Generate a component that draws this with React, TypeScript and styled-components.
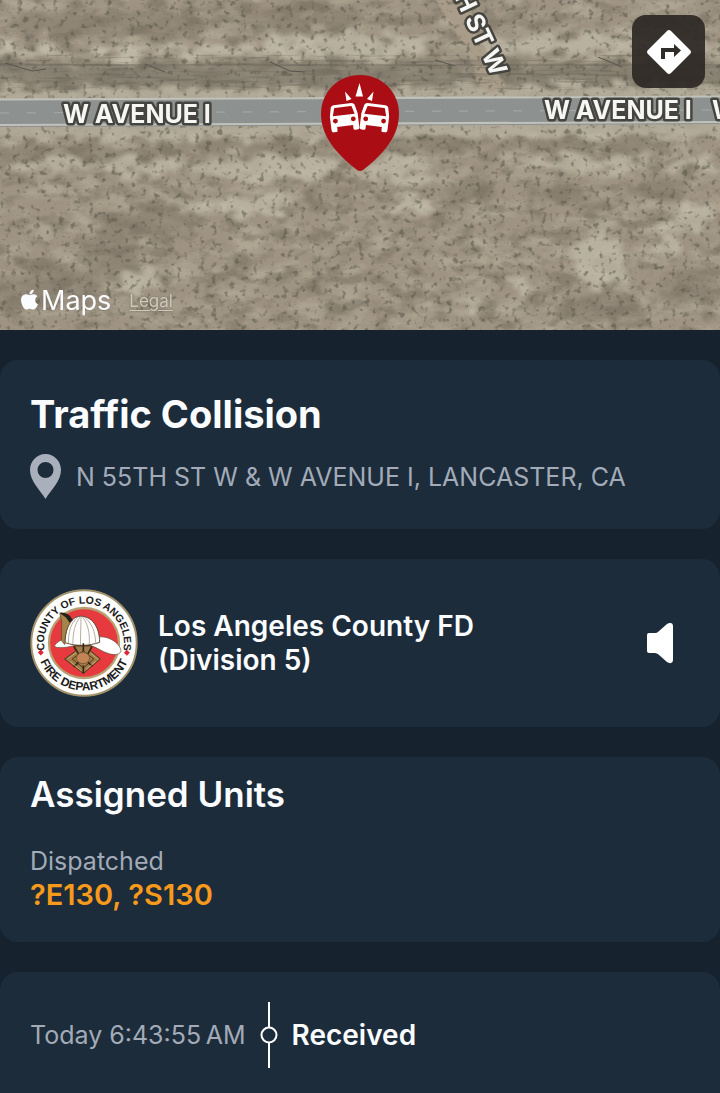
import React from 'react';
import styled, { createGlobalStyle } from 'styled-components';
import { FaApple } from 'react-icons/fa';

const GlobalStyle = createGlobalStyle`
	* { box-sizing: border-box; }

	body {
		margin: 0;
		background: #16222d;
		color: #fafcff;
		font-family: Inter, "Liberation Sans", sans-serif;
	}

	h1, h2, h3, p, dl, dt, dd { margin: 0; }
`;

const Page = styled.div`
	display: flex;
	flex-direction: column;
	gap: 30px;
	min-height: 100vh;
	overflow: hidden;
`;

const MapHeader = styled.header`
	position: relative;
	height: 330px;
	overflow: hidden;
	background: #a0937f;
`;

const MapDrawing = styled.svg`
	display: block;
	width: 100%;
	height: 100%;
`;

const RoadLabel = styled.text`
	fill: #f6f6f4;
	stroke: #45443f;
	stroke-width: 5px;
	stroke-linejoin: round;
	paint-order: stroke;
	font-family: Inter, "Liberation Sans", sans-serif;
	font-size: 25px;
	font-weight: 700;
`;

const IncidentPin = styled.svg`
	position: absolute;
	top: 75px;
	left: 50%;
	width: 80px;
	height: 97px;
	transform: translateX(-50%);
`;

const DirectionsButton = styled.button`
	position: absolute;
	top: 15px;
	right: 15px;
	display: grid;
	place-items: center;
	width: 73px;
	height: 73px;
	padding: 0;
	border: 0;
	border-radius: 14px;
	background: rgba(44, 40, 36, .92);
	cursor: pointer;
`;

const Attribution = styled.div`
	position: absolute;
	left: 18px;
	bottom: 14px;
	display: flex;
	align-items: center;
	gap: 18px;
`;

const MapsBrand = styled.span`
	display: flex;
	align-items: center;
	font-size: 27px;
	line-height: 30px;

	svg { margin-bottom: 4px; }
`;

const LegalLink = styled.a`
	color: #cfc9bd;
	font-size: 17px;
	line-height: 20px;
	text-shadow: 0 0 2px #6b6455;
	text-underline-offset: 3px;
`;

const Card = styled.section`
	padding: 30px;
	border-radius: 18px;
	background: #1c2c3b;
`;

const IncidentCard = styled(Card)`
	display: flex;
	flex-direction: column;
	gap: 16px;
`;

const IncidentTitle = styled.h1`
	font-size: 38px;
	font-weight: 700;
	line-height: 48px;
`;

const Address = styled.p`
	display: flex;
	align-items: center;
	gap: 15px;
	color: #a2abb7;
	font-size: 25px;
	line-height: 32px;

	svg { flex: none; }
`;

const AgencyCard = styled(Card)`
	display: flex;
	align-items: center;
	gap: 20px;

	svg { flex: none; }
`;

const AgencyName = styled.h2`
	flex: 1;
	font-size: 28px;
	font-weight: 600;
	line-height: 34px;

	span { display: block; }
`;

const SpeakerButton = styled.button`
	display: grid;
	place-items: center;
	padding: 0;
	margin-right: 16px;
	border: 0;
	background: none;
	cursor: pointer;
`;

const UnitsCard = styled(Card)`
	display: flex;
	flex-direction: column;
	gap: 28px;
	padding-top: 15px;
`;

const SectionTitle = styled.h2`
	font-size: 35px;
	font-weight: 600;
	line-height: 44px;
`;

const UnitGroup = styled.dl`
	dt {
		color: #a2abb7;
		font-size: 25px;
		line-height: 34px;
	}

	dd {
		color: #f79a1c;
		font-size: 29px;
		font-weight: 600;
		line-height: 34px;
	}
`;

const TimelineCard = styled(Card)`
	display: flex;
	flex: 1;
	align-items: flex-start;
	gap: 14px;
	border-radius: 18px 18px 0 0;
	line-height: 66px;

	svg { flex: none; }
`;

const TimelineTime = styled.time`
	color: #a2abb7;
	font-size: 25px;
`;

const TimelineStatus = styled.h3`
	font-size: 28px;
	font-weight: 600;
`;

const lightPatches = [
	[100, 52, 150, 4], [200, 51, 140, 4], [345, 46, 85, 11], [590, 44, 130, 9], [20, 52, 40, 4],
	[140, 168, 40, 9], [265, 168, 75, 11], [405, 168, 35, 12], [585, 163, 65, 7],
	[250, 205, 35, 10], [600, 260, 25, 30], [695, 218, 18, 16], [670, 240, 12, 16],
	[140, 283, 18, 12], [470, 302, 20, 7], [410, 207, 26, 7],
	[520, 283, 12, 8], [200, 207, 30, 5], [50, 165, 50, 5], [690, 163, 30, 6],
	[180, 135, 200, 4], [560, 132, 200, 4], [180, 94, 200, 4], [560, 91, 200, 4],
];

const darkPatches = [
	[110, 24, 100, 14], [300, 20, 70, 14], [70, 152, 90, 8], [230, 148, 100, 8],
	[400, 142, 90, 8], [600, 145, 90, 9], [465, 193, 26, 14], [560, 195, 30, 10],
	[150, 225, 50, 16], [600, 308, 40, 16], [40, 285, 60, 20], [660, 190, 30, 12],
	[110, 255, 30, 20], [340, 190, 30, 10], [690, 290, 30, 20], [320, 280, 18, 8],
];

const Satellite = () => (
	<MapDrawing viewBox="0 0 720 330" preserveAspectRatio="xMidYMid slice" role="img" aria-label="Satellite map of W Avenue I">
		<defs>
			<filter id="lightMottle" x="0" y="0" width="100%" height="100%" colorInterpolationFilters="sRGB">
				<feTurbulence type="fractalNoise" baseFrequency="0.03 0.06" numOctaves={6} seed={8} />
				<feColorMatrix values="0 0 0 0 .76  0 0 0 0 .73  0 0 0 0 .65  3 0 0 0 -1.3" />
			</filter>
			<filter id="darkMottle" x="0" y="0" width="100%" height="100%" colorInterpolationFilters="sRGB">
				<feTurbulence type="fractalNoise" baseFrequency="0.04 0.07" numOctaves={6} seed={21} />
				<feColorMatrix values="0 0 0 0 .43  0 0 0 0 .4  0 0 0 0 .34  4 0 0 0 -1.9" />
			</filter>
			<filter id="scrub" x="0" y="0" width="100%" height="100%" colorInterpolationFilters="sRGB">
				<feTurbulence type="fractalNoise" baseFrequency="0.17" numOctaves={2} seed={4} />
				<feColorMatrix values="0 0 0 0 .33  0 0 0 0 .33  0 0 0 0 .28  5 0 0 0 -2.9" />
				<feGaussianBlur stdDeviation={0.7} />
			</filter>
			<filter id="streaks" x="0" y="0" width="100%" height="100%" colorInterpolationFilters="sRGB">
				<feTurbulence type="fractalNoise" baseFrequency="0.02 0.3" numOctaves={3} seed={12} />
				<feColorMatrix values="0 0 0 0 .34  0 0 0 0 .33  0 0 0 0 .28  5 0 0 0 -2.6" />
			</filter>
			<filter id="ragged" filterUnits="userSpaceOnUse" x="-40" y="-40" width="800" height="410">
				<feTurbulence type="fractalNoise" baseFrequency="0.05 0.09" numOctaves={5} seed={3} />
				<feDisplacementMap in="SourceGraphic" scale={34} xChannelSelector="R" yChannelSelector="G" />
				<feGaussianBlur stdDeviation={2} />
			</filter>
			<filter id="verge" x="-5%" y="-20%" width="110%" height="140%">
				<feTurbulence type="fractalNoise" baseFrequency="0.08" numOctaves={3} seed={9} />
				<feDisplacementMap in="SourceGraphic" scale={10} xChannelSelector="R" yChannelSelector="G" />
				<feGaussianBlur stdDeviation={1} />
			</filter>
		</defs>

		<rect width="720" height="330" fill="#9f9483" />
		<rect width="720" height="330" filter="url(#lightMottle)" opacity=".45" />
		<rect width="720" height="330" filter="url(#darkMottle)" opacity=".45" />
		<g filter="url(#ragged)">
			{ darkPatches.map(([x, y, rx, ry], i) => (
				<ellipse key={i} cx={x} cy={y} rx={rx} ry={ry} fill="#776e60" opacity=".4" />
			)) }
			<path d="M-40 62H760V88H-40Z" fill="#7a7568" opacity=".6" />
			{ lightPatches.map(([x, y, rx, ry], i) => (
				<ellipse key={i} cx={x} cy={y} rx={rx} ry={ry} fill="#c5bdad" opacity=".7" />
			)) }
		</g>
		<g filter="url(#verge)">
			<path d="M432 -8H458L480 40L510 98H484L468 55Z" fill="#a99d8a" />
			<path d="M-10 92L730 89V133L-10 136Z" fill="#b3ab9a" opacity=".8" />
		</g>
		<rect width="720" height="330" filter="url(#scrub)" opacity=".55" />
		<rect y="55" width="720" height="35" filter="url(#streaks)" opacity=".3" />

		<path d="M0 99L720 96V124L0 127Z" fill="#8d9190" />
		<path d="M0 99.5L720 96.5M0 125L720 122" fill="none" stroke="#c0c2ba" strokeWidth="2" />
		<path d="M0 113L720 110" fill="none" stroke="#a9aba7" strokeWidth="1" strokeDasharray="9 18" />
		<path d="M5 63L32 71L46 69M145 64L165 72M270 62L290 71L305 72M435 60L455 66M598 57L622 67" fill="none" stroke="#57534a" strokeWidth="1" />
		<path d="M0 65H720" stroke="#5f5b50" strokeWidth="1" opacity=".5" />

		<RoadLabel x="63" y="123">W AVENUE I</RoadLabel>
		<RoadLabel x="544" y="119">W AVENUE I</RoadLabel>
		<RoadLabel x="712" y="119">W AVENUE I</RoadLabel>
		<RoadLabel x="500" y="74" textAnchor="end" transform="rotate(65 500 74)" dy="9">N 55TH ST W</RoadLabel>
	</MapDrawing>
);

const Car = () => (
	<>
		<path d="M-9 -13H9Q11 -13 12 -11L14 -2V12Q14 14 12 14H9Q8 14 8 12V9H-8V12Q-8 14 -9 14H-12Q-14 14 -14 12V-2L-12 -11Q-11 -13 -9 -13Z" fill="#fff" />
		<path d="M-8 -10H8Q9 -10 9 -9L11 -2H-11L-9 -9Q-9 -10 -8 -10Z" fill="#ab0d14" />
		<circle cx="-9" cy="3" r="2.4" fill="#ab0d14" />
		<circle cx="9" cy="3" r="2.4" fill="#ab0d14" />
	</>
);

const CollisionPin = () => (
	<IncidentPin viewBox="0 0 80 97" role="img" aria-label="Traffic collision">
		<path d="M40 0C62 0 79 17 79 39C79 65 57 84 43 95Q40 97 37 95C23 84 1 65 1 39C1 17 18 0 40 0Z" fill="#ab0d14" />
		<path d="M39.500 8L43 21.500H35.500ZM25 16.500L31.500 24L26.500 26ZM53.500 16.500L52 26L47 24Z" fill="#fff" />
		<g transform="translate(24 42) rotate(-7)"><Car /></g>
		<g transform="translate(55 42) rotate(7)"><Car /></g>
	</IncidentPin>
);

const DirectionsIcon = () => (
	<svg width="46" height="46" viewBox="0 0 46 46" aria-hidden="true">
		<path d="M21 2Q23 0 25 2L44 21Q46 23 44 25L25 44Q23 46 21 44L2 25Q0 23 2 21Z" fill="#fff" />
		<path d="M15 30V19H28V15L35 21.500L28 28V23H19V30Z" fill="#302c29" />
	</svg>
);

const AgencySeal = () => (
	<svg width="108" height="108" viewBox="27 24 330 330" role="img" aria-label="County of Los Angeles Fire Department">
		<defs>
			<path id="sealTop" d="M75 225A122 122 0 1 1 309 225" />
			<path id="sealBottom" d="M47 189A145 145 0 0 0 337 189" />
		</defs>
		<circle cx="192" cy="189" r="161" fill="#fdfdfb" stroke="#a4946c" strokeWidth="6" />
		<circle cx="192" cy="189" r="107" fill="#e63a3f" stroke="#b7a173" strokeWidth="7" />
		<g fill="#1b1b1b" fontFamily='"Liberation Sans", sans-serif' fontWeight="700" textAnchor="middle">
			<text fontSize="32"><textPath href="#sealTop" startOffset="50%">COUNTY OF LOS ANGELES</textPath></text>
			<text fontSize="36"><textPath href="#sealBottom" startOffset="50%">FIRE DEPARTMENT</textPath></text>
		</g>
		<path d="M60 209L69 218L60 227L51 218ZM323 210L332 219L323 228L314 219Z" fill="#d8283a" />
		<path d="M102 197C109 186 122 179 132 177L240 170C274 169 301 192 305 211C306 224 287 227 269 222C246 216 229 199 207 196C174 190 143 205 118 203Q104 204 102 197Z" fill="#fff" stroke="#5d4a32" strokeWidth="2" />
		<path d="M134 188C135 138 155 108 181 107C215 107 239 137 240 187C207 198 169 200 134 188Z" fill="#fff" stroke="#5d4a32" strokeWidth="3" />
		<path d="M183 107L181 195M181 108C164 130 158 156 158 193M186 108C205 130 210 160 208 193M174 109C151 128 145 153 144 190M192 109C217 128 226 155 228 190" fill="none" stroke="#92836c" strokeWidth="2" />
		<path d="M118 97Q133 94 148 108L157 119C140 137 134 160 133 194L123 181L124 126Z" fill="#a48449" stroke="#594523" strokeWidth="2" />
		<path d="M118 97Q136 94 149 106L157 118L148 127L137 111Z" fill="#241f1a" />
		<path d="M160 198H216L211 212L242 238L190 282L133 238L167 213Z" fill="#a17c49" stroke="#49351f" strokeWidth="3" />
		<path d="M190 213L222 238L190 265L156 238Z" fill="none" stroke="#49351f" strokeWidth="3" />
		<path d="M162 200L176 224M216 200L203 224M160 262L176 248M218 260L204 248M190 282V258M190 190V214" stroke="#352718" strokeWidth="5" />
		<path d="M142 238L168 218M150 246L184 274M234 238L212 220M228 245L198 270" fill="none" stroke="#c6a56c" strokeWidth="3" />
		<ellipse cx="189" cy="235" rx="20" ry="17" fill="#c48556" stroke="#7d5c36" strokeWidth="3" />
	</svg>
);

const App = () => {
	return (
		<Page>
			<GlobalStyle />
			<MapHeader>
				<Satellite />
				<CollisionPin />
				<DirectionsButton type="button" aria-label="Get directions">
					<DirectionsIcon />
				</DirectionsButton>
				<Attribution>
					<MapsBrand><FaApple size={23} aria-hidden="true" />Maps</MapsBrand>
					<LegalLink href="#legal">Legal</LegalLink>
				</Attribution>
			</MapHeader>

			<IncidentCard>
				<IncidentTitle>Traffic Collision</IncidentTitle>
				<Address>
					<svg width="31" height="45" viewBox="0 0 31 45" aria-hidden="true">
						<path fillRule="evenodd" d="M15.500 0C24 0 31 7 31 16C31 27 21 36 15.500 45C10 36 0 27 0 16C0 7 7 0 15.500 0ZM15.500 8A8 8 0 1 0 15.500 24A8 8 0 1 0 15.500 8Z" fill="#a9b0bb" />
					</svg>
					N 55TH ST W &amp; W AVENUE I, LANCASTER, CA
				</Address>
			</IncidentCard>

			<AgencyCard>
				<AgencySeal />
				<AgencyName>
					<span>Los Angeles County FD</span>
					<span>(Division 5)</span>
				</AgencyName>
				<SpeakerButton type="button" aria-label="Play audio">
					<svg width="28" height="42" viewBox="0 0 28 42" aria-hidden="true">
						<path d="M3 11H9Q11 11 12.500 9.500L21 2Q23 .5 25 1Q27 1.500 27 4V38Q27 40.500 25 41Q23 41.500 21 40L12.500 32.500Q11 31 9 31H3Q1 31 1 29V13Q1 11 3 11Z" fill="#fff" />
					</svg>
				</SpeakerButton>
			</AgencyCard>

			<UnitsCard>
				<SectionTitle>Assigned Units</SectionTitle>
				<UnitGroup>
					<dt>Dispatched</dt>
					<dd>?E130, ?S130</dd>
				</UnitGroup>
			</UnitsCard>

			<TimelineCard>
				<TimelineTime>Today 6:43:55{'\u202f'}AM</TimelineTime>
				<svg width="18" height="66" viewBox="0 0 18 66" aria-hidden="true">
					<path d="M9 0V25M9 41V66" stroke="#fff" strokeWidth="2" />
					<circle cx="9" cy="33" r="7.500" fill="none" stroke="#fff" strokeWidth="2" />
				</svg>
				<TimelineStatus>Received</TimelineStatus>
			</TimelineCard>
		</Page>
	);
};

export default App;
